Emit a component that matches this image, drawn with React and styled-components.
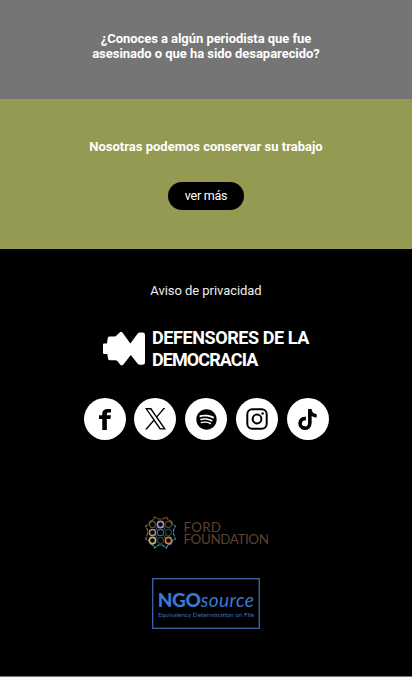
import React from "react";
import styled, { createGlobalStyle } from "styled-components";
import { FaSpotify, FaTiktok } from "react-icons/fa";

const GlobalStyle = createGlobalStyle`
  * {
    box-sizing: border-box;
  }
  body {
    margin: 0;
    background: #f7f7f7;
    font-family: Roboto, "Liberation Sans", sans-serif;
    overflow: hidden;
  }
`;

const Page = styled.div`
  display: flex;
  flex-direction: column;
  height: 680px;
`;

const Question = styled.section`
  height: 99px;
  padding-top: 31px;
  display: flex;
  flex-direction: column;
  align-items: center;
  background: #757575;
`;

const Line = styled.div`
  font-size: 13px;
  line-height: 15px;
  font-weight: 700;
  white-space: nowrap;
  letter-spacing: ${({ $spacing }) => $spacing || "0"};
  color: #fff;
`;

const Archive = styled.section`
  height: 150px;
  padding-top: 40px;
  display: flex;
  flex-direction: column;
  align-items: center;
  gap: 28px;
  background: #949a52;
`;

const Button = styled.button`
  width: 76px;
  height: 28px;
  padding: 0;
  border: none;
  border-radius: 14px;
  background: #000;
  color: #fff;
  font-family: inherit;
  font-size: 12.5px;
  letter-spacing: -0.25px;
  line-height: 28px;
  cursor: pointer;
`;

const Footer = styled.footer`
  height: 428px;
  padding-top: 34px;
  display: flex;
  flex-direction: column;
  align-items: center;
  background: #000;
  border-bottom: 1px solid #777;
`;

const Privacy = styled.a`
  font-size: 13px;
  line-height: 16px;
  letter-spacing: -0.05px;
  color: #eee;
`;

const Brand = styled.div`
  display: flex;
  align-items: center;
  gap: 7px;
  margin-top: 28px;
`;

const BrandName = styled.div`
  font-size: 18px;
  line-height: 22px;
  font-weight: 700;
  white-space: nowrap;
  color: #fff;
`;

const BrandLine = styled.div`
  letter-spacing: ${({ $spacing }) => $spacing};
`;

const Socials = styled.div`
  display: flex;
  gap: 8.75px;
  margin-top: 27px;
`;

const Social = styled.a`
  display: flex;
  align-items: center;
  justify-content: center;
  width: 42px;
  height: 42px;
  border-radius: 50%;
  background: #fff;
  color: #000;
`;

const Ford = styled.div`
  display: flex;
  align-items: center;
  gap: 7px;
  margin-top: 76px;
`;

const FordName = styled.div`
  padding-top: 1px;
  font-family: Lato, sans-serif;
  font-size: 13.4px;
  line-height: 12px;
  color: #5e402d;
`;

const FordLine = styled.div`
  letter-spacing: ${({ $spacing }) => $spacing};
`;

const NgoBox = styled.div`
  display: flex;
  flex-direction: column;
  align-items: center;
  width: 108px;
  height: 51px;
  margin-top: 29px;
  padding-top: 10px;
  border: 1.5px solid #3a619f;
  box-shadow: inset 0 0 0 0.5px #2c4a7a;
  font-family: Lato, sans-serif;
  color: #3a78d2;
`;

const NgoTitle = styled.div`
  font-size: 19px;
  line-height: 22px;
  font-style: italic;
  letter-spacing: 0.4px;
  white-space: nowrap;
  b {
    font-weight: 900;
    font-style: normal;
    letter-spacing: -0.3px;
  }
`;

const NgoText = styled.div`
  font-size: 6.4px;
  line-height: 8px;
  white-space: nowrap;
  color: #3a70bd;
`;

const BrandLogo = () => (
  <svg width="42" height="36" viewBox="0 0 42 36">
    <path
      fill="#fff"
      d="M0 13.5Q0 12.5 1 12.5H4L4.7 7Q5 5.5 6.5 5.5H11Q13 5.5 14 4L17 1.3Q18.2.2 19.4 1.5L27.4 12.5L34.7 2.4Q35.6 1.6 37 1.6H39.5Q42 1.6 42 4V31Q42 33.7 39.5 33.7H37Q35.6 33.7 34.7 32.8L27.8 24L20.2 33.8Q18.8 35.2 17.3 33.8L14.3 30Q13.7 29.3 12.3 29.3H7Q5.4 29.3 5.1 27.8L4.3 23H1Q0 23 0 22Z"
    />
  </svg>
);

const FacebookIcon = () => (
  <svg width="12" height="21" viewBox="0 0 11 21" preserveAspectRatio="none">
    <path
      fill="currentColor"
      d="M3 21V9.9H0V6.2H3V4.6C3 1.5 4.8 0 8 0H11V3.4H9C7.5 3.4 7.2 4 7.2 5V6.2H11L10.4 9.9H7.2V21Z"
    />
  </svg>
);

const XIcon = () => (
  <svg width="21" height="21.5" viewBox="0 0 1200 1227">
    <path
      fill="currentColor"
      d="M714.163 519.284L1160.89 0H1055.03L667.137 450.887L357.328 0H0L468.492 681.821L0 1226.37H105.866L515.491 750.218L842.672 1226.37H1200L714.137 519.284H714.163ZM569.165 687.828L521.697 619.934L144.011 79.6944H306.615L611.412 515.685L658.88 583.579L1055.08 1150.3H892.476L569.165 687.854V687.828Z"
    />
  </svg>
);

const InstagramIcon = () => (
  <svg width="22" height="22" viewBox="0 0 22 22" fill="none" stroke="currentColor" strokeWidth="2">
    <rect x="1.3" y="1.3" width="19.4" height="19.4" rx="5" />
    <circle cx="11" cy="11" r="4.4" />
    <circle cx="16.6" cy="5.5" r="1.3" fill="currentColor" stroke="none" />
  </svg>
);

// x, y, colour, stroke width
const rings = [
  [12, 12.5, "#66755f", 1],
  [20, 12.5, "#a592c4", 1.6],
  [28, 12.5, "#755e2a", 1],
  [12, 20.5, "#b98a7c", 1.5],
  [20, 20.5, "#35688c", 1.1],
  [28, 20.5, "#2c5a66", 1],
  [12, 28.5, "#b9b97a", 1.6],
  [20, 28.5, "#4c5c5c", 0.9],
  [28, 28.5, "#d97c3f", 1.6],
];

const edges = [
  ["M10 9Q13 9 14 5L18 7L22 7L26 5Q27 9 31 9", "#835c35"],
  ["M31 9Q31 13 35 14L33 18V22L35 27Q31 28 31 32", "#3f83a8"],
  ["M10 9Q9 13 5 14L7 18V22L5 27Q9 28 10 32", "#90683b"],
  ["M10 32Q13 32 14 36L18 33H22L26 36Q27 32 31 32", "#4a9bb8"],
];

const FordLogo = () => (
  <svg width="33" height="33" viewBox="3.5 4 33 33" fill="none">
    {edges.map(([d, color]) => (
      <path key={d} d={d} stroke={color} strokeWidth="1.1" strokeDasharray="4 .7" />
    ))}
    {rings.map(([x, y, color, width]) => (
      <circle key={`${x}-${y}`} cx={x} cy={y} r="3.1" stroke={color} strokeWidth={width} />
    ))}
    <path
      d="M15 15L17 18M23 15L25 18M15 23L17 26M23 23L25 26M17 15L15 18M25 15L23 18M17 23L15 26M25 23L23 26"
      stroke="#426159"
      strokeWidth=".8"
    />
  </svg>
);

const App = () => {
  return (
    <>
      <GlobalStyle />
      <Page>
        <Question>
          <Line $spacing="-0.05px">¿Conoces a algún periodista que fue</Line>
          <Line $spacing="-0.04px">asesinado o que ha sido desaparecido?</Line>
        </Question>
        <Archive>
          <Line>Nosotras podemos conservar su trabajo</Line>
          <Button>ver más</Button>
        </Archive>
        <Footer>
          <Privacy>Aviso de privacidad</Privacy>
          <Brand>
            <BrandLogo />
            <BrandName>
              <BrandLine $spacing="-0.4px">DEFENSORES DE LA</BrandLine>
              <BrandLine $spacing="-0.9px">DEMOCRACIA</BrandLine>
            </BrandName>
          </Brand>
          <Socials>
            <Social aria-label="Facebook">
              <FacebookIcon />
            </Social>
            <Social aria-label="X">
              <XIcon />
            </Social>
            <Social aria-label="Spotify">
              <FaSpotify size={21} />
            </Social>
            <Social aria-label="Instagram">
              <InstagramIcon />
            </Social>
            <Social aria-label="TikTok">
              <FaTiktok size={21} />
            </Social>
          </Socials>
          <Ford>
            <FordLogo />
            <FordName>
              <FordLine $spacing="0.2px">FORD</FordLine>
              <FordLine $spacing="-0.4px">FOUNDATION</FordLine>
            </FordName>
          </Ford>
          <NgoBox>
            <NgoTitle>
              <b>NGO</b>source
            </NgoTitle>
            <NgoText>Equivalency Determination on File</NgoText>
          </NgoBox>
        </Footer>
      </Page>
    </>
  );
};

export default App;
